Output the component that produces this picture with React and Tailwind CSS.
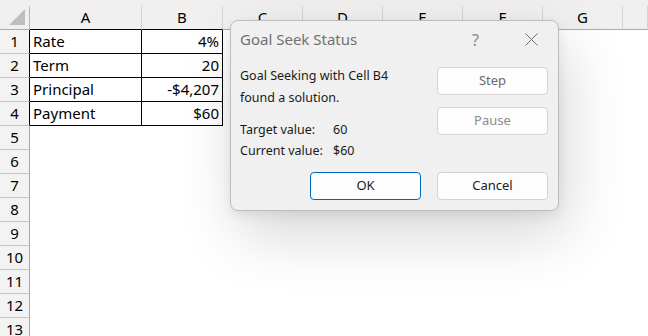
import React from "react";

const cols = ["A", "B", "C", "D", "E", "F", "G", ""];
const data = {
  1: ["Rate", "4%"],
  2: ["Term", "20"],
  3: ["Principal", "-$4,207"],
  4: ["Payment", "$60"],
};

function Sheet() {
  const rows = Array.from({ length: 13 }, (_, i) => i + 1);
  return (
    <div className="grid grid-cols-[30px_112px_81px_80px_80px_80px_80px_80px_1fr] auto-rows-[24px] font-['Noto_Sans',sans-serif] text-[15px] text-black">
      {/* header row */}
      <div className="relative bg-[#f0f0f0] border-r border-b border-r-[#b8b8b8] border-b-[#a9a9a9]">
        <svg className="absolute right-[4px] bottom-[4px]" width="16" height="16" viewBox="0 0 16 16">
          <polygon points="16,0 16,16 0,16" fill="#bfbfbf" />
        </svg>
      </div>
      {cols.map((c, i) => (
        <div
          key={c + i}
          className={
            "flex items-center justify-center bg-[#f0f0f0] border-r border-r-[#d4d4d4] border-b leading-none " +
            (i < 2 ? "border-b-black" : "border-b-[#a9a9a9]")
          }
        >
          {c}
        </div>
      ))}
      {rows.map((r) => (
        <React.Fragment key={r}>
          <div
            className={
              "flex items-center justify-center bg-[#f3f3f3] border-b border-b-[#c4c4c4] border-r " +
              (r <= 4 ? "border-r-black" : "border-r-[#a9a9a9]")
            }
          >
            {r}
          </div>
          {cols.map((c, i) => {
            const inTable = r <= 4 && i < 2;
            return (
              <div
                key={c + i}
                className={
                  "flex items-center px-[3px] overflow-hidden whitespace-nowrap leading-none " +
                  (inTable ? "border-r border-b border-black " : "") +
                  (i === 1 ? "justify-end" : "")
                }
              >
                {inTable ? data[r][i] : ""}
              </div>
            );
          })}
        </React.Fragment>
      ))}
    </div>
  );
}

function Button({ children, primary, textColor }) {
  return (
    <button
      className={
        "w-[111px] h-[28px] rounded-[4px] bg-[#fdfdfd] text-[13px] flex items-center justify-center border " +
        (primary ? "border-[#0067c0] text-[#1a1a1a]" : "border-[#d3d3d3] ") +
        (textColor || "")
      }
    >
      {children}
    </button>
  );
}

function Dialog() {
  return (
    <div className="absolute left-[230px] top-[20px] w-[329px] h-[191px] rounded-[8px] bg-[#f0f0f0] border border-[#bdbdbd] shadow-[8px_24px_60px_rgba(0,0,0,0.16),0_4px_12px_rgba(0,0,0,0.08)] flex flex-col font-['Noto_Sans',sans-serif] text-[#1a1a1a]">
      <div className="h-[37px] flex items-center pl-[9px] pr-[20px]">
        <span className="text-[15px] text-[#707070] flex-1">Goal Seek Status</span>
        <span className="text-[16px] text-[#8a8a8a] mr-[46px]">?</span>
        <svg width="13" height="13" viewBox="0 0 13 13">
          <path d="M0.5 0.5 L12.5 12.5 M12.5 0.5 L0.5 12.5" stroke="#6e6e6e" strokeWidth="1" />
        </svg>
      </div>
      <div className="flex flex-1 pl-[9px] pr-[10px]">
        <div className="flex-1 pt-[7px] text-[12.5px]">
          <div className="leading-[22px]">Goal Seeking with Cell B4</div>
          <div className="leading-[22px]">found a solution.</div>
          <div className="mt-[10px] flex leading-[21px]">
            <span className="w-[93px]">Target value:</span>
            <span>60</span>
          </div>
          <div className="flex leading-[21px]">
            <span className="w-[93px]">Current value:</span>
            <span>$60</span>
          </div>
        </div>
        <div className="pt-[9px] flex flex-col gap-[12px]">
          <Button textColor="text-[#6a6a6a]">Step</Button>
          <Button textColor="text-[#8c8c8c]">Pause</Button>
        </div>
      </div>
      <div className="flex justify-end gap-[16px] pr-[10px] pb-[10px]">
        <Button primary>OK</Button>
        <Button>Cancel</Button>
      </div>
    </div>
  );
}

export default function App() {
  return (
    <div className="relative w-[648px] h-[336px] overflow-hidden bg-white">
      <div className="h-[6px] bg-[#f3eeee]" />
      <Sheet />
      <Dialog />
    </div>
  );
}
